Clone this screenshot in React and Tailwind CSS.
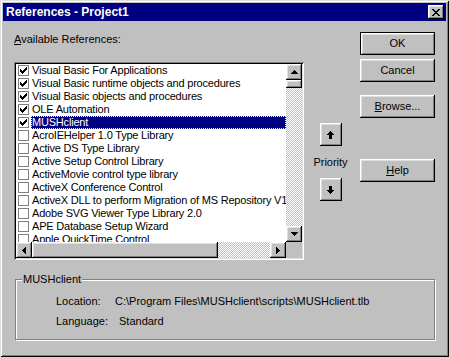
const raised =
  'bg-[#c0c0c0] shadow-[inset_-1px_-1px_0_#000000,inset_1px_1px_0_#ffffff,inset_-2px_-2px_0_#808080,inset_2px_2px_0_#dfdfdf]';
const sunken =
  'shadow-[inset_1px_1px_0_#808080,inset_-1px_-1px_0_#ffffff,inset_2px_2px_0_#000000,inset_-2px_-2px_0_#dfdfdf]';

const items = [
  { name: 'Visual Basic For Applications', checked: true },
  { name: 'Visual Basic runtime objects and procedures', checked: true },
  { name: 'Visual Basic objects and procedures', checked: true },
  { name: 'OLE Automation', checked: true },
  { name: 'MUSHclient', checked: true, selected: true },
  { name: 'AcroIEHelper 1.0 Type Library' },
  { name: 'Active DS Type Library' },
  { name: 'Active Setup Control Library' },
  { name: 'ActiveMovie control type library' },
  { name: 'ActiveX Conference Control' },
  { name: 'ActiveX DLL to perform Migration of MS Repository V1' },
  { name: 'Adobe SVG Viewer Type Library 2.0' },
  { name: 'APE Database Setup Wizard' },
  { name: 'Apple QuickTime Control' },
];

function Arrow({ dir }) {
  // 7x4 pixel triangle
  const paths = {
    up: 'M3 0h1v1h-1z M2 1h3v1h-3z M1 2h5v1h-5z M0 3h7v1h-7z',
    down: 'M0 0h7v1h-7z M1 1h5v1h-5z M2 2h3v1h-3z M3 3h1v1h-1z',
  };
  if (dir === 'left' || dir === 'right') {
    const d =
      dir === 'left'
        ? 'M3 0h1v7h-1z M2 1h1v5h-1z M1 2h1v3h-1z M0 3h1v1h-1z'
        : 'M0 0h1v7h-1z M1 1h1v5h-1z M2 2h1v3h-1z M3 3h1v1h-1z';
    return (
      <svg width="4" height="7" viewBox="0 0 4 7" shapeRendering="crispEdges">
        <path d={d} fill="#000" />
      </svg>
    );
  }
  return (
    <svg width="7" height="4" viewBox="0 0 7 4" shapeRendering="crispEdges">
      <path d={paths[dir]} fill="#000" />
    </svg>
  );
}

function CheckBox({ checked }) {
  return (
    <div className="w-[11px] h-[11px] border border-[#808080] bg-white flex items-center justify-center shrink-0">
      {checked && (
        <svg width="7" height="7" viewBox="0 0 7 7" shapeRendering="crispEdges">
          <path
            d="M6 0h1v1h-1z M5 1h2v1h-2z M0 2h1v1h-1z M4 2h3v1h-3z M0 3h2v1h-2z M3 3h3v1h-3z M0 4h5v1h-5z M1 5h3v1h-3z M2 6h1v1h-1z"
            fill="#000"
          />
        </svg>
      )}
    </div>
  );
}

function PushButton({ children, isDefault }) {
  return (
    <div
      className={`w-[75px] h-[23px] flex items-center justify-center bg-[#c0c0c0] ${
        isDefault
          ? 'border border-black shadow-[inset_1px_1px_0_#ffffff,inset_-1px_-1px_0_#808080,inset_2px_2px_0_#dfdfdf]'
          : raised
      }`}
    >
      {children}
    </div>
  );
}

function PriorityArrow({ up }) {
  const d = up
    ? 'M3 0h1v1h-1z M2 1h3v1h-3z M1 2h5v1h-5z M0 3h7v1h-7z M2 4h3v4h-3z'
    : 'M2 0h3v4h-3z M0 4h7v1h-7z M1 5h5v1h-5z M2 6h3v1h-3z M3 7h1v1h-1z';
  return (
    <div className={`w-[22px] h-[23px] flex items-center justify-center ${raised}`}>
      <svg width="7" height="8" viewBox="0 0 7 8" shapeRendering="crispEdges">
        <path d={d} fill="#000" />
      </svg>
    </div>
  );
}

const dither =
  'bg-[repeating-conic-gradient(#c0c0c0_0%_25%,#ffffff_0%_50%)] bg-[length:2px_2px]';

export default function App() {
  return (
    <div
      className={`w-[449px] h-[357px] p-[3px] bg-[#c0c0c0] flex flex-col font-['Liberation_Sans',Arial,sans-serif] text-[11px] leading-[13px] text-black shadow-[inset_1px_1px_0_#dfdfdf,inset_-1px_-1px_0_#000000,inset_2px_2px_0_#ffffff,inset_-2px_-2px_0_#808080]`}
    >
      {/* Title bar */}
      <div className="h-[18px] bg-[#000080] flex items-center justify-between pl-[3px] pr-[2px] shrink-0">
        <span className="text-white font-bold text-[12px]">References - Project1</span>
        <div className={`w-[16px] h-[14px] flex items-center justify-center ${raised}`}>
          <svg width="8" height="7" viewBox="0 0 8 7" shapeRendering="crispEdges">
            <path
              d="M0 0h2v1h-2z M6 0h2v1h-2z M1 1h2v1h-2z M5 1h2v1h-2z M2 2h4v1h-4z M3 3h2v1h-2z M2 4h4v1h-4z M1 5h2v1h-2z M5 5h2v1h-2z M0 6h2v1h-2z M6 6h2v1h-2z"
              fill="#000"
            />
          </svg>
        </div>
      </div>

      {/* Main row */}
      <div className="flex">
        {/* Left: list */}
        <div className="ml-[11px] pt-[12px]">
          <div className="h-[13px]">
            <u>A</u>vailable References:
          </div>
          <div className={`mt-[16px] w-[290px] h-[198px] p-[2px] bg-white ${sunken}`}>
            <div className="grid grid-cols-[270px_16px] grid-rows-[178px_16px] h-full">
              <div className="overflow-hidden bg-white">
                {items.map((it) => (
                  <div key={it.name} className="h-[13px] flex items-center pl-[2px]">
                    <CheckBox checked={it.checked} />
                    <span
                      className={`ml-[2px] flex-1 h-[13px] leading-[12px] px-[1px] whitespace-nowrap tracking-[-0.2px] ${
                        it.selected
                          ? 'bg-[#000080] text-white outline outline-1 outline-dotted outline-[#ffff80] -outline-offset-1'
                          : ''
                      }`}
                    >
                      {it.name}
                    </span>
                  </div>
                ))}
              </div>

              {/* Vertical scrollbar */}
              <div className="flex flex-col">
                <div className={`h-[16px] flex items-center justify-center ${raised}`}>
                  <Arrow dir="up" />
                </div>
                <div className={`h-[8px] ${raised}`} />
                <div className={`flex-1 ${dither}`} />
                <div className={`h-[16px] flex items-center justify-center ${raised}`}>
                  <Arrow dir="down" />
                </div>
              </div>

              {/* Horizontal scrollbar */}
              <div className="flex">
                <div className={`w-[16px] flex items-center justify-center ${raised}`}>
                  <Arrow dir="left" />
                </div>
                <div className={`w-[186px] ${raised}`} />
                <div className={`flex-1 ${dither}`} />
                <div className={`w-[16px] flex items-center justify-center ${raised}`}>
                  <Arrow dir="right" />
                </div>
              </div>
              <div className="bg-[#c0c0c0]" />
            </div>
          </div>
        </div>

        {/* Middle: priority */}
        <div className="ml-[6px] w-[41px] pt-[102px] flex flex-col items-center">
          <PriorityArrow up />
          <div className="mt-[10px] h-[13px]">Priority</div>
          <div className="mt-[9px]">
            <PriorityArrow />
          </div>
        </div>

        {/* Right: buttons */}
        <div className="ml-[9px] pt-[11px] flex flex-col">
          <PushButton isDefault>OK</PushButton>
          <div className="mt-[4px]">
            <PushButton>Cancel</PushButton>
          </div>
          <div className="mt-[13px]">
            <PushButton>
              <span>
                <u>B</u>rowse...
              </span>
            </PushButton>
          </div>
          <div className="mt-[41px]">
            <PushButton>
              <span>
                <u>H</u>elp
              </span>
            </PushButton>
          </div>
        </div>
      </div>

      {/* Group box */}
      <div className="relative mt-[19px] ml-[12px] w-[420px] h-[61px] border border-[#808080] shadow-[1px_1px_0_#ffffff,inset_1px_1px_0_#ffffff] pl-[40px] pt-[15px]">
        <span className="absolute left-[6px] -top-[7px] px-[1px] bg-[#c0c0c0]">MUSHclient</span>
        <div className="flex h-[13px]">
          <span className="w-[59px]">Location:</span>
          <span>C:\Program Files\MUSHclient\scripts\MUSHclient.tlb</span>
        </div>
        <div className="flex h-[13px] mt-[7px]">
          <span className="w-[63px]">Language:</span>
          <span>Standard</span>
        </div>
      </div>
    </div>
  );
}
